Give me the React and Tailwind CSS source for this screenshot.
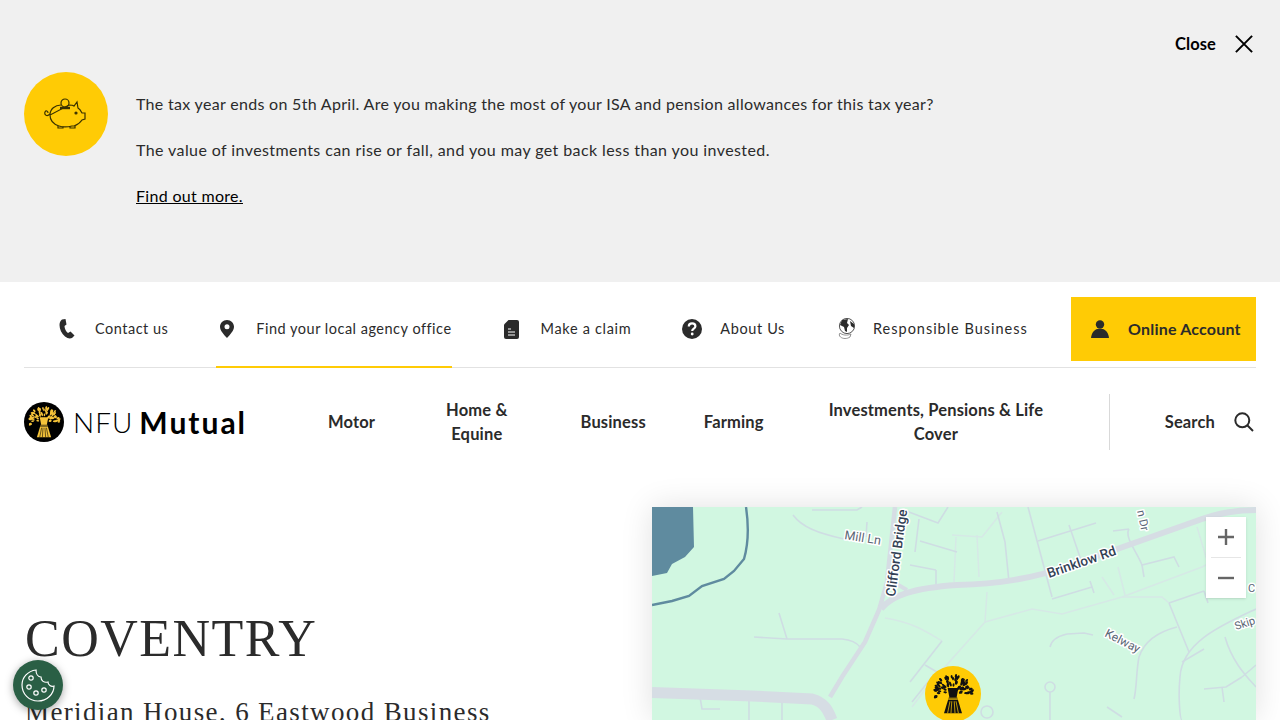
const Y = "#ffcb05";

const TUFT = (() => {
  const out = [];
  let s = 7;
  const rnd = () => { s = (s * 16807) % 2147483647; return (s % 1000) / 1000; };
  for (let i = 0; i < 90; i++) {
    const a = Math.PI + rnd() * Math.PI * 1.16 - Math.PI * 0.08;
    const r = 3 + Math.sqrt(rnd()) * 13.5;
    out.push([20 + Math.cos(a) * r, 19.5 + Math.sin(a) * r * 0.92, a]);
  }
  return out;
})();

function Wheat({ color, dark = false }) {
  const gap = dark ? Y : "#000";
  return (
    <svg viewBox="0 0 40 40" className="w-full h-full">
      <g fill={color}>
        {TUFT.map(([x, y, a], i) => (
          <ellipse key={i} cx={x} cy={y} rx="1.5" ry="0.85" transform={`rotate(${(a * 180) / Math.PI} ${x} ${y})`} />
        ))}
      </g>
      <path d="M15.5 15 L17 23 H23 L24.5 15 Z" fill={color} />
      <path d="M16.5 23 L12.5 36 H27.5 L23.5 23 Z" fill={color} />
      <path d="M16 24.2 H24" stroke={gap} strokeWidth="1" />
      <path d="M17.5 26 L15.5 36 M19 26 L18.3 36 M21 26 L21.7 36 M22.5 26 L24.5 36" stroke={gap} strokeWidth="0.6" />
    </svg>
  );
}

function Item({ icon, label, w, active, track = "tracking-[0.5px]" }) {
  return (
    <a className={`flex items-center h-[71px] pb-[5px] border-b-2 ${active ? "border-[#ffcb05]" : "border-transparent"}`}>
      <span className={`flex shrink-0 ${w}`}>{icon}</span>
      <span className={`text-[14.500px] ${track} text-[#2b2b2b] whitespace-nowrap`}>{label}</span>
    </a>
  );
}

function MapArt() {
  const minor = [
    "M141 8 C150 20 165 26 192 32", "M160 3 L205 3 L210 0", "M215 15 L214 30", "M267 12 L263 45", "M268 34 L305 45", "M284 63 L284 78 M258 58 L284 63",
    "M249 2 L286 16 L296 0", "M127 106 L135 132 M102 130 L135 132 L190 132 C200 133 205 136 208 140",
    "M48 190 L50 202 L68 202", "M97 192 L97 213", "M130 195 L130 213", "M290 134 L258 175", "M273 158 L285 165", "M260 195 L280 170",
    "M376 0 L400 90", "M386 34 L444 16", "M417 18 L430 56", "M400 92 L440 80", "M438 74 L442 86",
    "M461 24 L477 22 M477 22 C472 30 485 45 490 58 L522 50 L527 60", "M490 58 L492 70",
    "M517 96 L552 84 M517 96 L537 145", "M552 84 L556 96", "M604 102 C570 118 530 135 528 170 C526 190 528 213 530 213",
    "M525 120 C505 125 492 135 487 150 C484 165 485 180 482 192", "M530 155 L552 142", "M573 130 C580 155 595 170 604 180", "M590 170 L604 158",
    "M552 182 L574 180 L590 170", "M570 180 L572 195", "M415 127 L432 126 L441 128", "M415 127 C402 130 399 135 398 140", "M455 200 L470 210",
    "M345 5 L353 35 L357 75",
  ];
  const pale = [
    "M233 111 C260 115 275 125 290 134", "M335 85 L333 115 L275 180 L260 200", "M333 115 L380 102 L410 107 L470 90 L550 60 L570 50",
    "M470 90 L510 90 L517 96", "M450 70 L462 88", "M466 60 L473 88", "M545 20 L560 70", "M300 28 L330 30 L350 5", "M304 30 L302 75", "M325 28 L327 70",
  ];
  return (
    <svg viewBox="0 0 604 213" className="block w-full h-full">
      <rect width="604" height="213" fill="#d1f7e1" />
      <path d="M0 0 H41 L42 40 L33 50 L20 57 L15 66 L0 69 Z" fill="#5f8b9f" />
      <path d="M94 0 C97 20 96 38 92 52 L82 64 L72 72 L50 79 L37 89 L20 94 L0 98" fill="none" stroke="#5f8b9f" strokeWidth="2.400" />
      <g fill="none" stroke="#d6e9e6" strokeWidth="1.500">{pale.map((d, i) => <path key={i} d={d} />)}</g>
      <g fill="none" stroke="#cfdde3" strokeWidth="1.600">{minor.map((d, i) => <path key={i} d={d} />)}</g>
      <g fill="none" stroke="#cfdde3" strokeWidth="1.600">
        <circle cx="398" cy="180" r="5" />
        <circle cx="335" cy="205" r="6" />
        <path d="M398 185 V213" />
      </g>
      <g fill="none" stroke="#d6dde4">
        <path d="M0 185.500 L100 189 L160 192 C172 195 176 203 180 213" strokeWidth="11" />
        <path d="M178 190 L190 170 L213 135 L227 103 L235 75 L243 0" strokeWidth="4.500" />
        <path d="M229 102 C240 88 262 81 305 78 C345 77 380 72 420 58 L550 12 C570 5 585 3 604 3" strokeWidth="6" />
        <path d="M236 72 L255 83" strokeWidth="4" />
      </g>
      <g fontFamily="Roboto, sans-serif" paintOrder="stroke" stroke="#ffffff" strokeWidth="3" strokeLinejoin="round">
        <text x="192" y="32" fontSize="12.500" fill="#5b6675" transform="rotate(9 192 32)">Mill Ln</text>
        <text x="243" y="90" fontSize="13.500" fontWeight="500" fill="#334155" transform="rotate(-82 243 90)">Clifford Bridge</text>
        <text x="397" y="71" fontSize="13.500" fontWeight="500" fill="#334155" transform="rotate(-19 397 71)">Brinklow Rd</text>
        <text x="452" y="129" fontSize="12" fill="#5b6675" transform="rotate(27 452 129)">Kelway</text>
        <text x="485" y="4" fontSize="11.500" fill="#5b6675" transform="rotate(78 485 4)">n Dr</text>
        <text x="584" y="123" fontSize="11" fill="#5b6675" transform="rotate(-18 584 123)">Skip</text>
        <text x="596" y="85" fontSize="11" fill="#5b6675">C</text>
      </g>
    </svg>
  );
}

const Pig = () => (
  <svg viewBox="0 0 44 32" className="w-[44px] h-[32px]" fill="none" stroke="#3a3200" strokeWidth="1.200">
    <path d="M6 17 C6 11 11 7 17 7 M25 7 C27 7 29 7 30 8 L33 4 L34 10 C36 11 37 13 38 15 L41 15 L41 21 L38 22 C36 25 33 27 30 28 L28 28 C24 29 18 29 15 28 C9 26 6 22 6 17 Z" />
    <path d="M6 16 C3 19 0 17 1 14 C2 12 4 13 4 15" />
    <path d="M14 28 V30 H19 V28.600 M26 28.600 V30 H31 V28" />
    <circle cx="21" cy="5" r="4" />
    <path d="M16 10 H26" strokeWidth="2.400" />
    <circle cx="32" cy="15" r="1" fill="#3a3200" />
  </svg>
);

export default function App() {
  return (
    <div className="relative h-[720px] overflow-hidden bg-white text-[#2b2b2b]" style={{ fontFamily: 'Lato, sans-serif' }}>
      {/* banner */}
      <section className="h-[282px] bg-[#f0f0f0] px-6 pt-[28px]">
        <div className="flex justify-end items-center h-[32px] pr-[3px] gap-[19px]">
          <span className="text-[16.500px] font-bold text-black tracking-[0.1px]">Close</span>
          <svg viewBox="0 0 20 20" className="w-[18px] h-[18px]" stroke="#000" strokeWidth="2.200"><path d="M1 1 L19 19 M19 1 L1 19" /></svg>
        </div>
        <div className="flex mt-[12px] gap-[28px]">
          <div className="w-[84px] h-[84px] rounded-full bg-[#ffcb05] flex items-center justify-center shrink-0">
            <Pig />
          </div>
          <div className="text-[16px] leading-[24px] tracking-[0.31px] text-[#2b2b2b] pt-[20px]">
            <p>The tax year ends on 5th April. Are you making the most of your ISA and pension allowances for this tax year?</p>
            <p className="mt-[22px] tracking-[0.41px]">The value of investments can rise or fall, and you may get back less than you invested.</p>
            <p className="mt-[22px]"><a className="underline text-black">Find out more.</a></p>
          </div>
        </div>
      </section>

      {/* utility nav */}
      <div className="mx-6 border-b border-[#e2e2e2] h-[86px] flex items-start pt-[15px]">
        <div className="flex items-start">
          <div className="ml-[35px]">
            <Item w="w-[36px]" label="Contact us" icon={
              <svg viewBox="0 0 16 20" className="w-[16px] h-[20px]" fill="#2b2b2b"><path d="M3 .5 L6.500 0 L7.500 5.500 L5.500 7 C5.500 9.500 7 12.500 9 14 L11.500 12.500 L15.500 16.500 L13 19 C11 20 8.500 19.500 6 17.500 C2.500 14.500 .5 10 .5 6 C.5 3.500 1.500 1.500 3 .5 Z" /></svg>
            } />
          </div>
          <div className="ml-[48px]">
            <Item w="w-[40px] pl-[4px]" label="Find your local agency office" active icon={
              <svg viewBox="0 0 14 18" className="w-[14px] h-[18px]" fill="#2b2b2b"><path fillRule="evenodd" d="M7 0 C11 0 14 3 14 6.800 C14 10.500 10 15 7 18 C4 15 0 10.500 0 6.800 C0 3 3 0 7 0 Z M7 4.200 A2.500 2.500 0 1 0 7 9.200 A2.500 2.500 0 1 0 7 4.200 Z" /></svg>
            } />
          </div>
          <div className="ml-[52px]">
            <Item w="w-[37px]" track="tracking-[0.68px]" label="Make a claim" icon={
              <svg viewBox="0 0 15 19" className="w-[15px] h-[19px]"><path d="M4.500 0 H13 A2 2 0 0 1 15 2 V17 A2 2 0 0 1 13 19 H2 A2 2 0 0 1 0 17 V4.500 Z" fill="#2b2b2b" /><path d="M4 9 H7 M4 12 H11 M4 15 H11" stroke="#fff" strokeWidth="1.200" /></svg>
            } />
          </div>
          <div className="ml-[51px]">
            <Item w="w-[38px]" track="tracking-[0.62px]" label="About Us" icon={
              <svg viewBox="0 0 20 20" className="w-[20px] h-[20px]"><circle cx="10" cy="10" r="10" fill="#2b2b2b" /><path d="M6.800 7.500 C6.800 5.500 8.300 4.400 10.100 4.400 C12 4.400 13.400 5.600 13.400 7.200 C13.400 9.600 10.200 9.600 10.200 12" fill="none" stroke="#fff" strokeWidth="2.200" /><circle cx="10.200" cy="15" r="1.400" fill="#fff" /></svg>
            } />
          </div>
          <div className="ml-[52px]">
            <Item w="w-[36px]" track="tracking-[0.98px]" label="Responsible Business" icon={
              <svg viewBox="0 0 18 22" className="w-[18px] h-[22px]"><circle cx="10" cy="8" r="7.600" fill="#fff" stroke="#2b2b2b" strokeWidth="0.8" /><path d="M5 2 L11 1 L10 5 L12 7 L10 10 L10 14 L8 13 L7 9 L3 7 Z M13 3 L17 6 L17 10 L14 8 Z" fill="#2b2b2b" /><path d="M3 15 C5 17 10 18 14 16 L13 19 C10 21 6 21 3.500 19 C2 18 2 16 3 15 Z" fill="none" stroke="#777" strokeWidth="0.8" /></svg>
            } />
          </div>
        </div>
        <a className="ml-auto w-[185px] h-[64px] bg-[#ffcb05] flex items-center pl-[20px]">
          <svg viewBox="0 0 18 18" className="w-[18px] h-[18px] shrink-0" fill="#2b2b2b"><circle cx="9" cy="4.500" r="4.200" /><path d="M0 18 C.5 13 3 10 6 9 H12 C15 10 17.500 13 18 18 Z" /></svg>
          <span className="ml-[19px] text-[16px] font-bold tracking-[0.2px] whitespace-nowrap">Online Account</span>
        </a>
      </div>

      {/* main nav */}
      <nav className="mx-6 flex items-center h-[108px]">
        <div className="flex items-center w-[221px] shrink-0">
          <span className="w-[40px] h-[40px] rounded-full bg-black p-[1px] shrink-0"><Wheat color="#f5c33a" /></span>
          <span className="ml-[9px] text-[28px] leading-none font-light tracking-[1px] text-black">NFU</span>
          <span className="ml-[6px] text-[30px] leading-none font-bold tracking-[2px] text-black">Mutual</span>
        </div>
        <div className="flex items-center text-[16.500px] font-bold tracking-[0.15px] leading-[24px] text-center text-[#2b2b2b]">
          <a className="ml-[83px] whitespace-nowrap">Motor</a>
          <a className="ml-[71px] whitespace-nowrap">Home &amp;<br />Equine</a>
          <a className="ml-[73px] whitespace-nowrap">Business</a>
          <a className="ml-[58px] whitespace-nowrap">Farming</a>
          <a className="ml-[65px] whitespace-nowrap">Investments, Pensions &amp; Life<br />Cover</a>
        </div>
        <div className="ml-auto flex items-center h-[56px] border-l border-[#d9d9d9] w-[147px] justify-end pr-[2px]">
          <span className="text-[16.500px] font-bold tracking-[0.15px]">Search</span>
          <svg viewBox="0 0 20 20" className="ml-[19px] w-[20px] h-[20px]" fill="none" stroke="#2b2b2b" strokeWidth="2"><circle cx="8.300" cy="8.300" r="7" /><path d="M13.500 13.500 L19 19" /></svg>
        </div>
      </nav>

      {/* content */}
      <div className="mx-6 flex pt-[31px]">
        <div className="w-[628px] shrink-0 pt-[102px]">
          <h1 className="text-[52px] leading-[60px] text-[#2b2b2b] tracking-[1.5px] ml-[1px] whitespace-nowrap" style={{ fontFamily: '"Liberation Serif", serif' }}>COVENTRY</h1>
          <p className="mt-[25px] ml-[1px] text-[27px] leading-[36px] tracking-[1.37px] whitespace-nowrap" style={{ fontFamily: '"Liberation Serif", serif' }}>Meridian House, 6 Eastwood Business</p>
        </div>
        <div className="relative w-[604px] h-[213px] shrink-0 shadow-[0_0_30px_rgba(0,0,0,0.12)]">
          <MapArt />
          <div className="absolute top-[10px] right-[10px] w-[40px] h-[81px] bg-white flex flex-col items-center shadow-sm">
            <svg viewBox="0 0 40 40" className="w-[40px] h-[40px]" stroke="#666" strokeWidth="2.400"><path d="M12 20 H28 M20 12 V28" /></svg>
            <div className="w-[30px] h-px bg-[#e6e6e6]" />
            <svg viewBox="0 0 40 40" className="w-[40px] h-[40px]" stroke="#666" strokeWidth="2.400"><path d="M12 20 H28" /></svg>
          </div>
          <div className="absolute left-[273px] top-[159px] w-[56px] h-[56px] rounded-full bg-[#ffcb05] p-[4px]">
            <Wheat color="#111" dark />
          </div>
        </div>
      </div>

      {/* cookie */}
      <button className="absolute left-[13px] top-[660px] w-[50px] h-[50px] rounded-full bg-[#2a5f45] shadow-[0_2px_8px_rgba(0,0,0,0.35)] flex items-center justify-center">
        <svg viewBox="0 0 34 34" className="w-[34px] h-[34px]" fill="none" stroke="#fff" strokeWidth="1.200">
          <path d="M15 2 C7 3 1 9 1 17 C1 26 8 33 17 33 C26 33 33 26 33 18 C30 19 27 17 27 14 C23 15 20 13 20 9 C17 9 15 6 15 2 Z" />
          <circle cx="10" cy="10" r="2.200" /><circle cx="8" cy="19" r="2.200" /><circle cx="15" cy="25" r="2.200" /><circle cx="23" cy="22" r="2.200" />
        </svg>
      </button>
    </div>
  );
}
